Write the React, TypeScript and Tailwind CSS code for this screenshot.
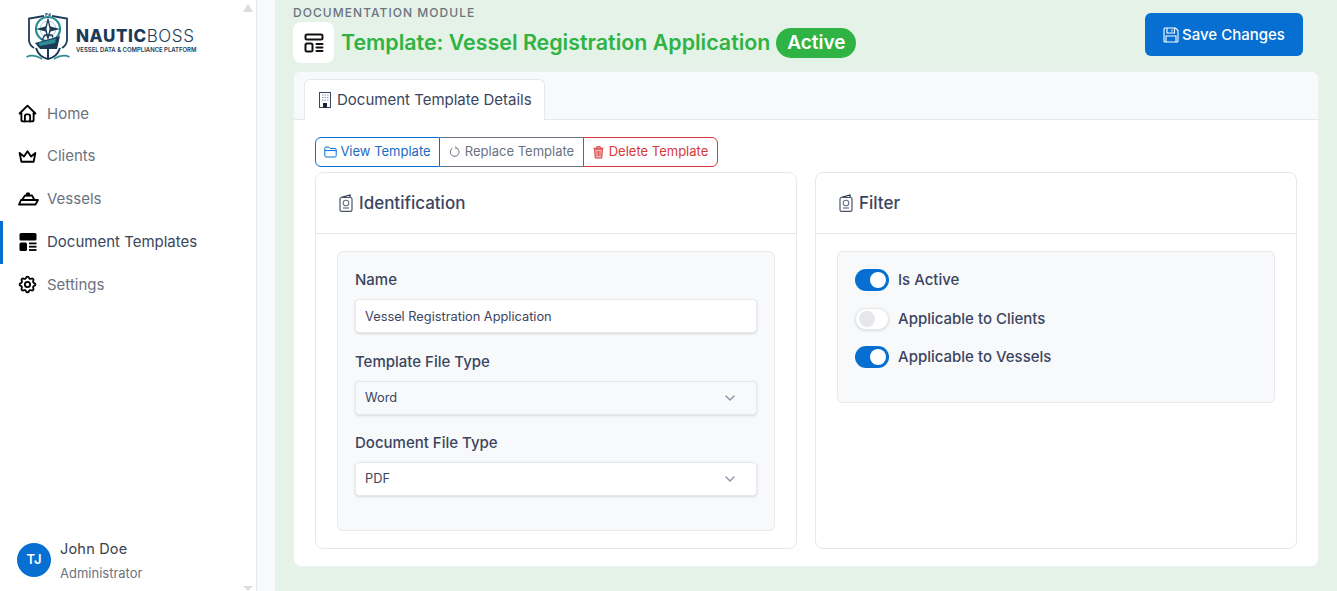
import { TbChevronDown, TbCrown, TbHome, TbSettings } from "react-icons/tb";

const font = { fontFamily: "Inter, 'Noto Sans', sans-serif" };

function Logo() {
  return (
    <div className="flex items-start gap-[6px]">
      <svg width="44" height="48" viewBox="0 0 44 48" fill="none" className="shrink-0">
        <path d="M18 3 L3 5.5 V27 C3 30 5 33 8 35 M26 3 L41 5.5 V27 C41 30 39 33 36 35" stroke="#1b3a57" strokeWidth="1.8" />
        <path d="M20 3 V0 L24 3 V0" stroke="#1b3a57" strokeWidth="1" />
        <circle cx="22" cy="16" r="12" stroke="#2c8c93" strokeWidth="2.2" />
        <circle cx="22" cy="16" r="8" stroke="#9cc7ca" strokeWidth="0.8" />
        <path d="M22 4 L24.5 13.5 L34 16 L24.5 18.5 L22 28 L19.5 18.5 L10 16 L19.5 13.5 Z" fill="#1b3a57" />
        <path d="M22 9 L23.5 16 L22 23 L20.5 16 Z" fill="#ffffff" />
        <path d="M9 30 L34 23 L31 36 H14 Z" fill="#1b3a57" />
        <path d="M12 30 L30 25.5 L29 30 L14 33 Z" fill="#2c8c93" />
        <path d="M16 27 L19 22 H26 L27 24.5" stroke="#1b3a57" strokeWidth="1.4" />
        <path d="M22 33 V46 M10 35 C12 41 17 45 22 46 C27 45 32 41 34 35" stroke="#1b3a57" strokeWidth="2" />
        <path d="M0.5 44 C6 41 11 43 16 46 M43.5 44 C38 41 33 43 28 46" stroke="#2c8c93" strokeWidth="1.6" />
      </svg>
      <div className="flex flex-col mt-[14px] text-[#1b3a57]">
        <div className="text-[17px] leading-[18px] tracking-[0.6px]">
          <span className="font-extrabold">NAUTIC</span>
          <span className="font-light">BOSS</span>
        </div>
        <div className="text-[5.95px] leading-[8px] mt-[1px] font-semibold whitespace-nowrap">
          VESSEL DATA &amp; COMPLIANCE PLATFORM
        </div>
      </div>
    </div>
  );
}

function ShipIcon() {
  return (
    <svg width="21" height="20" viewBox="0 0 21 20" fill="none" stroke="#000" strokeWidth="1.8" strokeLinejoin="round" strokeLinecap="round" className="ml-px">
      <path d="M1 15.5 H17.5 L20 11 H3 Z" />
      <path d="M4 11 L7 6.5 H14 L16.5 11" />
      <path d="M9 6.5 V4.5 H11 V6.5" />
    </svg>
  );
}

function TemplateSolidIcon() {
  return (
    <svg width="20" height="20" viewBox="0 0 20 20" fill="#000" className="ml-px">
      <rect x="1.5" y="1" width="17" height="7.5" rx="1.5" />
      <rect x="1.5" y="10.5" width="7.5" height="8.5" rx="1.5" />
      <rect x="11" y="10.5" width="7.5" height="1.8" />
      <rect x="11" y="13.8" width="7.5" height="1.8" />
      <rect x="11" y="17.1" width="7.5" height="1.8" />
    </svg>
  );
}

function TemplateOutlineIcon() {
  return (
    <svg width="24" height="24" viewBox="0 0 24 24" fill="none" stroke="#111" strokeWidth="2" strokeLinecap="round">
      <rect x="3.5" y="3.5" width="17" height="5" rx="1.5" />
      <rect x="3.5" y="12.5" width="7" height="8" rx="1.5" />
      <path d="M14.5 13 H20.5 M14.5 16.5 H20.5 M14.5 20 H20.5" />
    </svg>
  );
}

function BuildingIcon() {
  return (
    <svg width="14" height="16" viewBox="0 0 14 16" fill="none" className="shrink-0">
      <rect x="1.5" y="0.5" width="11" height="15" fill="#fff" stroke="#3b4560" />
      <path d="M4 3 H5.5 M6.5 3 H8 M9 3 H10.5 M4 5.5 H5.5 M6.5 5.5 H8 M9 5.5 H10.5 M4 8 H5.5 M6.5 8 H8 M9 8 H10.5" stroke="#8a93a6" strokeWidth="1.2" />
      <rect x="5" y="11" width="4" height="4.5" fill="#182433" />
    </svg>
  );
}

function PassportIcon() {
  return (
    <svg width="14" height="18" viewBox="0 0 14 18" fill="none" className="shrink-0 -mt-[1px]">
      <path d="M2 3.5 L11 1 V3.5" stroke="#182433" strokeWidth="1.2" />
      <rect x="1" y="3.5" width="12" height="13.8" rx="1.6" stroke="#4a5468" strokeWidth="1.2" />
      <circle cx="7" cy="9" r="2.8" stroke="#6b7280" strokeWidth="1.1" />
      <path d="M4 14 H10" stroke="#4a5468" strokeWidth="1.2" />
    </svg>
  );
}

function FolderIcon() {
  return (
    <svg width="13" height="12" viewBox="0 0 13 12" fill="none" stroke="#066fd1" strokeWidth="1" className="shrink-0">
      <path d="M0.8 2.2 C0.8 1.5 1.2 1 2 1 H4.8 L6 2.4 H11 C11.7 2.4 12.2 2.9 12.2 3.6 V9.8 C12.2 10.5 11.7 11 11 11 H2 C1.3 11 0.8 10.5 0.8 9.8 Z" />
      <path d="M0.8 4.6 H12.2" />
    </svg>
  );
}

function ReplaceIcon() {
  return (
    <svg width="12" height="12" viewBox="0 0 12 12" fill="none" stroke="#6b7280" strokeWidth="1" className="shrink-0">
      <path d="M7.4 1.9 A4.4 4.4 0 1 1 3.6 2.1" />
      <path d="M6 0.5 L7.6 1.9 L6.2 3.3" />
    </svg>
  );
}

function TrashIcon() {
  return (
    <svg width="11" height="13" viewBox="0 0 11 13" fill="none" className="shrink-0">
      <path d="M1.6 3 H9.4 L8.8 12 H2.2 Z" fill="#f3b4ba" stroke="#d63939" />
      <path d="M0.5 2.2 H10.5 M3.8 2 V0.7 H7.2 V2" stroke="#d63939" />
      <path d="M4 5 V10 M5.5 5 V10 M7 5 V10" stroke="#d63939" strokeWidth="0.7" />
    </svg>
  );
}

function SaveIcon() {
  return (
    <svg width="16" height="16" viewBox="0 0 16 16" fill="none" stroke="#fff" strokeWidth="1.1" className="shrink-0">
      <path d="M1 2 C1 1.4 1.4 1 2 1 H12.5 L15 3.5 V14 C15 14.6 14.6 15 14 15 H2 C1.4 15 1 14.6 1 14 Z" />
      <path d="M4 1 V6 H11.5 V1 M9 2.5 V4.5" />
      <path d="M3 15 V9 H13 V15" />
    </svg>
  );
}

function NavItem({ icon, label, active }: { icon: React.ReactNode; label: string; active?: boolean }) {
  return (
    <div
      className={`flex items-center h-[42.8px] pl-[14px] border-l-[3px] ${
        active ? "border-[#066fd1] text-[#3b4560]" : "border-transparent text-[#6b7280]"
      }`}
    >
      <span className="w-[30px] flex items-center text-black">{icon}</span>
      <span className="text-[15px]">{label}</span>
    </div>
  );
}

function Toggle({ on, label }: { on?: boolean; label: string }) {
  return (
    <div className="flex items-center gap-[9px]">
      <span
        className={`w-[34px] h-[22px] rounded-full flex items-center px-[3px] ${
          on ? "bg-[#066fd1] justify-end" : "bg-white border border-[#e6e7e9] justify-start shadow-sm"
        }`}
      >
        <span className={`w-4 h-4 rounded-full ${on ? "bg-white" : "bg-[#e5e7eb]"}`} />
      </span>
      <span className="text-[15px] font-[450] text-[#3b4560]">{label}</span>
    </div>
  );
}

function FakeSelect({ value, bg }: { value: string; bg: string }) {
  return (
    <div className={`h-[34px] rounded border border-[#e6e8ec] shadow-sm flex items-center justify-between pl-[9px] pr-[18px] ${bg}`}>
      <span className="text-[12.8px] text-[#3b4560]">{value}</span>
      <TbChevronDown size={16} className="text-[#8a93a6]" />
    </div>
  );
}

function Panel({ title, children }: { title: string; children: React.ReactNode }) {
  return (
    <div className="flex-1 border border-[#e6e8ec] rounded-lg flex flex-col">
      <div className="h-[61px] flex items-center gap-[6px] pl-[23px] border-b border-[#e6e8ec] shrink-0">
        <PassportIcon />
        <span className="text-[17px] font-[450] text-[#3b4560] mt-[2px]">{title}</span>
      </div>
      <div className="px-[21px] pt-[17px] pb-[17px] flex-1 flex flex-col">{children}</div>
    </div>
  );
}

export default function App() {
  return (
    <div className="w-[1337px] h-[591px] overflow-hidden flex bg-[#e5f2e7]" style={font}>
      {/* sidebar */}
      <aside className="w-[257px] h-full bg-white border-r border-[#e5e7eb] flex flex-col relative shrink-0">
        <div className="h-[92.4px] pt-[13px] pl-[26px] shrink-0">
          <Logo />
        </div>
        <nav className="flex flex-col">
          <NavItem icon={<TbHome size={21} strokeWidth={2.1} />} label="Home" />
          <NavItem icon={<TbCrown size={21} strokeWidth={2.1} />} label="Clients" />
          <NavItem icon={<ShipIcon />} label="Vessels" />
          <NavItem icon={<TemplateSolidIcon />} label="Document Templates" active />
          <NavItem icon={<TbSettings size={21} strokeWidth={2.1} />} label="Settings" />
        </nav>
        <div className="mt-auto flex items-center gap-[9px] pl-[17px] pb-[13px]">
          <span className="w-[34px] h-[34px] rounded-full bg-[#066fd1] text-white text-[13px] font-semibold flex items-center justify-center">
            TJ
          </span>
          <div className="flex flex-col mt-[-3px] mb-[-4px]">
            <span className="text-[14.5px] leading-[22px] text-[#3b4048] tracking-[0.2px]">John Doe</span>
            <span className="text-[13px] leading-[18px] mt-[4px] text-[#6b7280]">Administrator</span>
          </div>
        </div>
        <span className="absolute right-[3px] top-[4px] w-0 h-0 border-x-[5.5px] border-x-transparent border-b-[8px] border-b-[#dcdcdc]" />
        <span className="absolute right-[3px] bottom-0 w-0 h-0 border-x-[5.5px] border-x-transparent border-t-[5px] border-t-[#dcdcdc]" />
      </aside>
      <div className="w-[18px] h-full bg-[#f8f9fb] shrink-0" />

      {/* main */}
      <main className="flex-1 pl-[18px] pr-[18px] flex flex-col min-w-0">
        <div className="h-[71px] flex justify-between shrink-0">
          <div>
            <div className="text-[12px] leading-[14px] pt-[6px] h-[22px] font-medium text-[#6b7280] tracking-[1.05px]">
              DOCUMENTATION MODULE
            </div>
            <div className="flex items-center">
              <span className="w-[41px] h-[41px] bg-white rounded-lg flex items-center justify-center">
                <TemplateOutlineIcon />
              </span>
              <span className="ml-[7px] -mt-[2px] text-[21.4px] leading-[30px] font-semibold text-[#2fb344] whitespace-nowrap">
                Template: Vessel Registration Application
              </span>
              <span className="ml-[6px] h-[30px] w-[80px] pt-[2px] rounded-full bg-[#2fb344] text-white text-[19px] font-semibold flex items-center justify-center">
                Active
              </span>
            </div>
          </div>
          <button className="mt-[13px] mr-[16px] w-[158px] h-[43px] rounded-md bg-[#066fd1] text-white text-[15px] font-medium flex items-center justify-center gap-[3px]">
            <SaveIcon />
            <span className="mt-px">Save Changes</span>
          </button>
        </div>

        <div className="h-[496px] bg-white rounded-lg border border-[#eef0f3] flex flex-col overflow-hidden shrink-0">
          <div className="h-[48px] bg-[#f8f9fb] border-b border-[#e6e8ec] pl-[10px] pt-[7px] shrink-0">
            <div className="w-[241px] h-[41px] bg-white border border-[#e6e8ec] border-b-0 rounded-t-md flex items-center gap-[5px] pl-[13px]">
              <BuildingIcon />
              <span className="text-[15px] text-[#3b4560] whitespace-nowrap">Document Template Details</span>
            </div>
          </div>
          <div className="flex-1 pl-[21px] pr-[21px] pt-[17px] flex flex-col">
            <div className="flex h-[30px] text-[13px] shrink-0">
              <button className="w-[125px] border border-[#066fd1] rounded-l-md flex items-center justify-center gap-[3px] text-[#206bc4]">
                <FolderIcon />
                View Template
              </button>
              <button className="w-[144px] border border-l-0 border-[#6b7280] flex items-center justify-center gap-[4px] text-[#6b7280]">
                <ReplaceIcon />
                Replace Template
              </button>
              <button className="w-[135px] border border-[#d63939] -ml-px rounded-r-md flex items-center justify-center gap-[5px] text-[#d63939]">
                <TrashIcon />
                Delete Template
              </button>
            </div>
            <div className="flex gap-[18px] mt-[5px] h-[377px]">
              <Panel title="Identification">
                <div className="flex-1 bg-[#f8f9fb] border border-[#e6e8ec] rounded-md px-[17px] pt-[17px] flex flex-col">
                  <label className="text-[15px] leading-[22px] font-[450] text-[#3b4560]">Name</label>
                  <input
                    readOnly
                    value="Vessel Registration Application"
                    className="mt-[8px] h-[34px] rounded border border-[#e6e8ec] shadow-sm bg-white pl-[9px] text-[12.8px] text-[#3b4560] outline-none"
                  />
                  <label className="mt-[18px] mb-[8px] text-[15px] leading-[22px] font-[450] text-[#3b4560]">Template File Type</label>
                  <FakeSelect value="Word" bg="bg-[#f8f9fb]" />
                  <label className="mt-[17px] mb-[8px] text-[15px] leading-[22px] font-[450] text-[#3b4560]">Document File Type</label>
                  <FakeSelect value="PDF" bg="bg-white" />
                </div>
              </Panel>
              <Panel title="Filter">
                <div className="h-[152px] bg-[#f8f9fb] border border-[#e6e8ec] rounded-md px-[17px] pt-[17px] flex flex-col gap-4">
                  <Toggle on label="Is Active" />
                  <Toggle label="Applicable to Clients" />
                  <Toggle on label="Applicable to Vessels" />
                </div>
              </Panel>
            </div>
          </div>
        </div>
      </main>
    </div>
  );
}
